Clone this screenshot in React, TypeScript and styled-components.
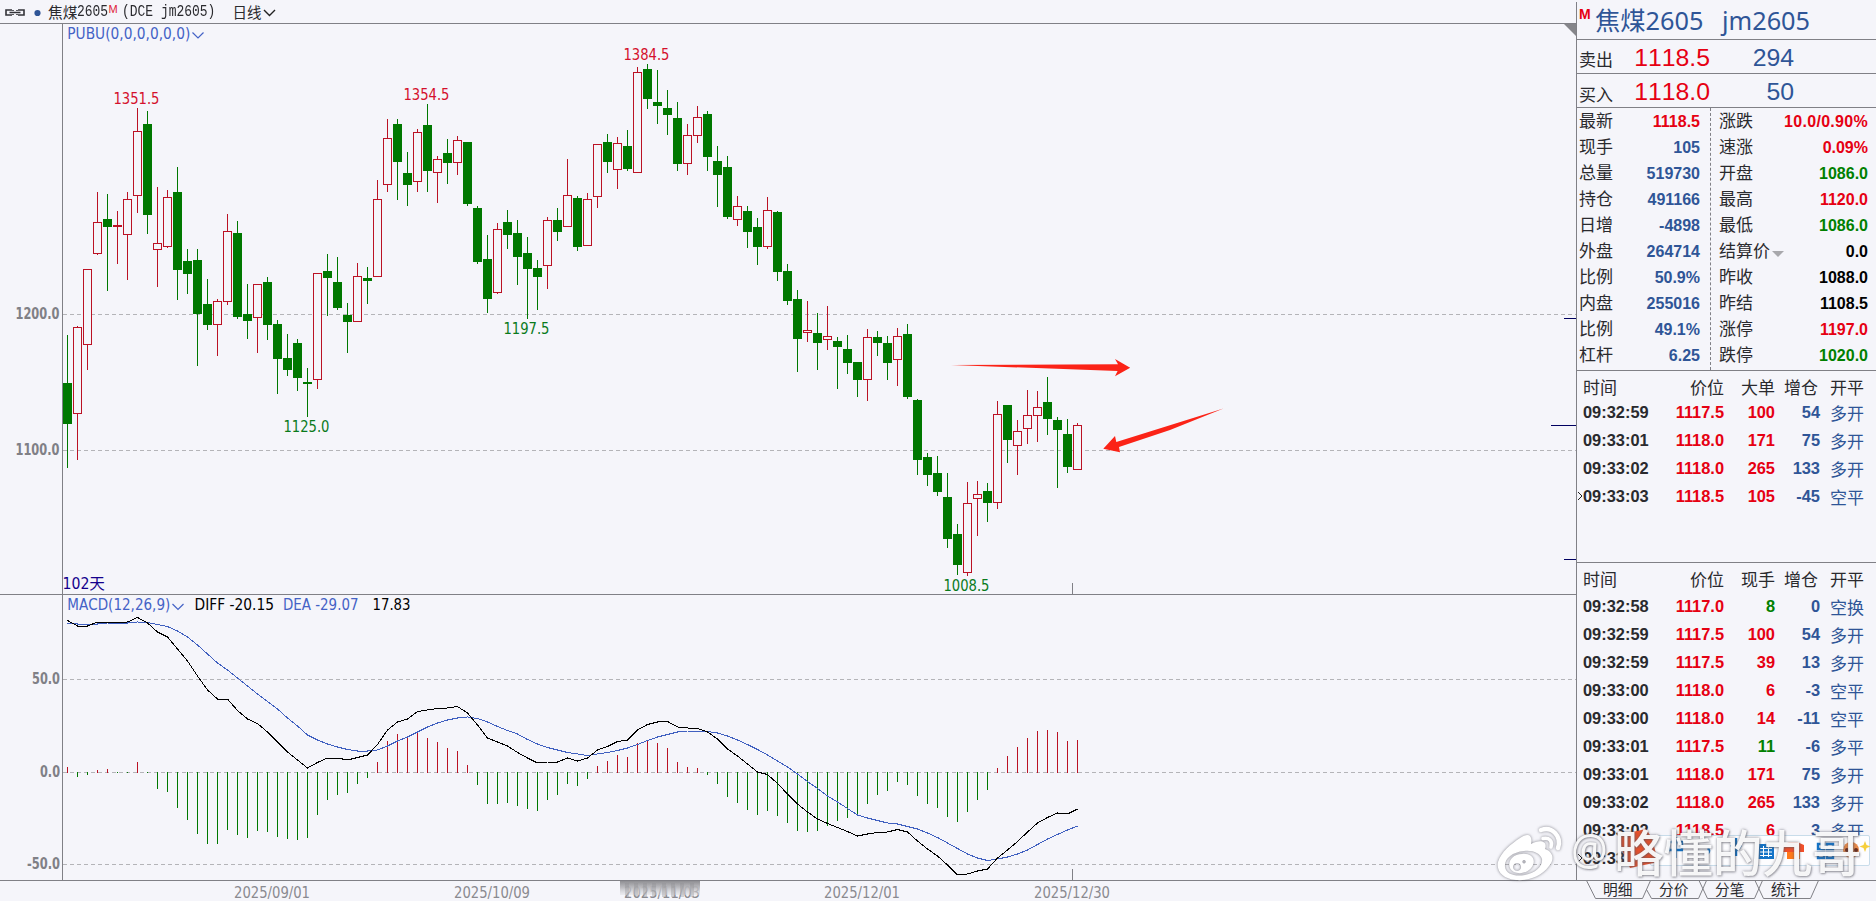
import React from "react";
import styled, { createGlobalStyle } from "styled-components";

const C = {
  bg: "#f5f5fa",
  line: "#808086",
  up: "#bb1224",
  down: "#007800",
  red: "#e60012",
  green: "#008000",
  blue: "#2f5597",
  ink: "#2a2a2e",
};

const CJK = '"Liberation Sans", "Noto Sans CJK SC", sans-serif';
const TAHOMA = '"DejaVu Sans Condensed", "DejaVu Sans", "Noto Sans CJK SC", sans-serif';

const GlobalStyle = createGlobalStyle`
  html, body { margin: 0; padding: 0; background: ${C.bg}; overflow: hidden; }
  * { box-sizing: border-box; }
`;

const Screen = styled.div`
  position: relative;
  width: 1876px;
  height: 901px;
  background: ${C.bg};
  font-family: ${CJK};
  font-kerning: none;
  color: ${C.ink};
  overflow: hidden;
`;
const Main = styled.div`
  display: flex;
  height: 880px;
`;
const ChartArea = styled.div`
  width: 1576px;
  display: flex;
  flex-direction: column;
`;
const Header = styled.header`
  height: 24px;
  border-bottom: 1px solid ${C.line};
  display: flex;
  align-items: center;
  padding-left: 5px;
  white-space: nowrap;
`;
const Name = styled.span`
  font: 400 14.7px/22px "Noto Sans CJK SC", sans-serif;
  margin-left: 7px;
`;
const Mono = styled.span<{ $w: number }>`
  display: inline-block;
  width: ${(p) => p.$w}px;
  font: 16px/22px "Liberation Mono", monospace;
  transform: scaleX(0.81);
  transform-origin: 0 50%;
  white-space: pre;
`;
const MainMark = styled.sup`
  font: 11px/12px "Liberation Sans", sans-serif;
  color: #e02038;
  align-self: flex-start;
  margin-top: 3px;
  width: 14px;
`;
const Period = styled.span`
  font: 400 14.5px/22px "Noto Sans CJK SC", sans-serif;
  margin-right: 2px;
`;
const Pane = styled.svg`
  display: block;
  flex: none;
`;
const ChartText = styled.text`
  font-family: ${TAHOMA};
  font-size: 15px;
`;
const Divider = styled.div`
  height: 1px;
  background: ${C.line};
`;

const Panel = styled.aside`
  width: 300px;
  margin-top: 2px;
  border-left: 1px solid ${C.line};
  display: flex;
  flex-direction: column;
  font-kerning: none;
`;
const Title = styled.h1`
  margin: 0;
  height: 38px;
  border-bottom: 1px solid ${C.line};
  display: flex;
  font: 25.3px/37px "Noto Sans", "Noto Sans CJK SC", sans-serif;
  color: ${C.blue};
  padding-left: 2px;
  white-space: pre;
`;
const TitleMark = styled.span`
  font: bold 14px/24px "Liberation Sans", sans-serif;
  color: ${C.red};
  width: 16px;
`;
const TitleName = styled.span`
  width: 127px;
  font-weight: 400;
`;
const Depth = styled.div`
  height: 34px;
  border-bottom: 1px solid ${C.line};
  display: grid;
  grid-template-columns: 34px 97px 84px;
  padding-left: 2px;
  font-size: 24.8px;
  line-height: 35px;
  text-align: right;
`;
const Label = styled.span<{ $shift?: number }>`
  font: 400 17px/26px "Noto Sans CJK SC", sans-serif;
  color: ${C.ink};
  text-align: left;
  position: relative;
  top: ${(p) => p.$shift ?? -1}px;
  white-space: nowrap;
`;
const Num = styled.span<{ $c: string }>`
  color: ${(p) => p.$c};
`;
const Stats = styled.div`
  display: grid;
  grid-template-columns: 133px 167px;
  height: 263px;
  border-bottom: 1px solid ${C.line};
`;
const StatCol = styled.div<{ $right?: boolean }>`
  padding: 0 ${(p) => (p.$right ? 9 : 10)}px 0 ${(p) => (p.$right ? 8 : 2)}px;
  border-left: ${(p) => (p.$right ? `1px dashed ${C.line}` : "none")};
`;
const Stat = styled.div`
  height: 26px;
  display: flex;
  justify-content: space-between;
`;
const StatNum = styled(Num)<{ $loose?: boolean }>`
  font: bold 16px/${(p) => (p.$loose ? 27 : 28)}px "Liberation Sans", sans-serif;
  letter-spacing: ${(p) => (p.$loose ? 0.3 : 0)}px;
`;
const Caret = styled.i`
  display: inline-block;
  border: 6px solid transparent;
  border-top-color: #a8a8ac;
  border-bottom: 0;
  margin-left: 2px;
`;
const Ticks = styled.section<{ $h: number }>`
  height: ${(p) => p.$h}px;
  flex: none;
  overflow: hidden;
  padding-top: 3px;
`;
const TickRow = styled.div`
  position: relative;
  height: 28px;
  display: grid;
  grid-template-columns: 82px 59px 51px 45px 56px;
  padding-left: 6px;
  text-align: right;
  font: bold 16.4px/28px "Liberation Sans", sans-serif;
`;
const TickHead = styled(TickRow)<{ $h: number }>`
  height: ${(p) => p.$h}px;
  font: 400 17px/25px "Noto Sans CJK SC", sans-serif;
`;
const Time = styled.span`
  text-align: left;
`;
const Kind = styled.span`
  font: 400 17px/29px "Noto Sans CJK SC", sans-serif;
  text-align: left;
  padding-left: 10px;
  color: ${C.blue};
`;
const HeadKind = styled(Kind)`
  color: ${C.ink};
  line-height: 25px;
`;
const HeadDelta = styled.span`
  padding-right: 2px;
`;
const Current = styled.svg`
  position: absolute;
  left: 0;
  top: 9px;
`;
const Footer = styled.footer`
  display: flex;
  height: 20px;
`;
const Tabs = styled.nav`
  position: relative;
  width: 300px;
  height: 20px;
`;
const TabShapes = styled.svg`
  position: absolute;
  left: 0;
  top: -1px;
`;
const TabList = styled.div`
  position: relative;
  display: flex;
  padding-left: 27px;
`;
const Tab = styled.span`
  width: 56px;
  font: 400 14.7px/16px "Noto Sans CJK SC", sans-serif;
`;
const Overlay = styled.div`
  position: absolute;
  left: 1490px;
  top: 815px;
  width: 386px;
  height: 72px;
`;
const OverlayArt = styled.svg`
  position: absolute;
  inset: 0;
`;

/* [direction, high, bodyTop, bodyBottom, low], one entry per trading day */
type Candle = [0 | 1, number, number, number, number];
const candles: Candle[] = [
  [0, 335, 383, 424, 468], [1, 326, 327, 414, 460], [1, 269, 269, 345, 370], [1, 192, 222, 254, 255],
  [0, 194, 219, 227, 291], [1, 211, 225, 227, 264], [1, 192, 199, 235, 280], [1, 108, 131, 196, 213],
  [0, 111, 124, 215, 234], [1, 187, 243, 250, 287], [1, 190, 197, 247, 248], [0, 167, 192, 270, 300],
  [0, 249, 261, 274, 294], [0, 249, 260, 314, 366], [0, 279, 304, 325, 330], [1, 299, 301, 325, 356],
  [1, 214, 231, 302, 305], [0, 221, 233, 317, 319], [0, 284, 314, 321, 339], [1, 284, 284, 318, 353],
  [0, 277, 282, 325, 340], [0, 320, 324, 359, 394], [0, 334, 358, 370, 376], [0, 339, 343, 378, 391],
  [0, 368, 382, 384, 417], [1, 273, 273, 380, 389], [0, 254, 271, 278, 316], [0, 257, 282, 308, 310],
  [0, 303, 315, 322, 353], [1, 263, 276, 322, 322], [0, 267, 278, 281, 304], [1, 180, 199, 277, 277],
  [1, 119, 138, 185, 192], [0, 119, 124, 162, 200], [0, 152, 173, 185, 206], [1, 129, 132, 182, 192],
  [0, 104, 125, 171, 192], [1, 156, 159, 173, 203], [0, 139, 153, 163, 184], [1, 136, 140, 163, 175],
  [0, 142, 142, 204, 206], [0, 206, 208, 262, 264], [0, 235, 259, 299, 313], [1, 223, 229, 293, 294],
  [0, 210, 222, 235, 249], [0, 220, 233, 257, 285], [0, 237, 253, 269, 319], [0, 260, 268, 277, 310],
  [1, 217, 220, 266, 289], [0, 208, 220, 232, 241], [1, 159, 195, 227, 227], [0, 196, 198, 247, 251],
  [1, 193, 199, 246, 246], [1, 144, 144, 197, 208], [0, 134, 142, 162, 173], [1, 137, 143, 170, 189],
  [0, 130, 146, 169, 171], [1, 67, 72, 173, 173], [0, 64, 69, 99, 109], [0, 70, 102, 106, 124],
  [0, 90, 108, 115, 135], [0, 102, 118, 164, 171], [1, 124, 135, 164, 175], [1, 106, 117, 136, 143],
  [0, 111, 114, 157, 171], [0, 146, 161, 175, 207], [0, 156, 167, 217, 219], [1, 196, 206, 220, 226],
  [0, 206, 211, 232, 248], [0, 218, 227, 247, 265], [1, 197, 210, 247, 249], [0, 211, 212, 272, 281],
  [0, 264, 271, 301, 305], [0, 290, 299, 339, 372], [1, 301, 330, 333, 342], [0, 313, 333, 343, 370],
  [1, 306, 336, 340, 350], [0, 337, 341, 347, 389], [0, 335, 349, 363, 374], [0, 362, 362, 380, 397],
  [1, 329, 337, 380, 401], [0, 331, 337, 343, 356], [0, 336, 343, 363, 380], [1, 328, 336, 360, 386],
  [0, 324, 334, 397, 399], [0, 399, 400, 460, 475], [0, 453, 457, 475, 486], [0, 456, 473, 492, 496],
  [0, 473, 497, 539, 548], [0, 524, 534, 565, 575], [1, 482, 503, 573, 576], [1, 481, 494, 499, 536],
  [0, 483, 491, 503, 522], [1, 401, 414, 503, 509], [0, 405, 405, 440, 463], [1, 420, 431, 446, 475],
  [1, 390, 415, 429, 444], [1, 391, 407, 416, 442], [0, 377, 402, 419, 435], [0, 417, 420, 430, 488],
  [0, 419, 434, 467, 473], [1, 423, 425, 470, 470],
];

const bars = [
  767, 777, 775, 770, 769, 773, 773, 762, 773, 789, 792, 808, 820, 834, 844, 844, 830, 835, 838, 831,
  832, 837, 839, 840, 838, 815, 800, 795, 793, 784, 778, 762, 741, 734, 736, 732, 738, 742, 748, 751,
  765, 785, 804, 804, 803, 806, 809, 811, 800, 795, 784, 786, 779, 766, 761, 755, 757, 743, 740, 743,
  748, 762, 767, 768, 775, 784, 797, 803, 810, 815, 811, 816, 823, 831, 832, 831, 826, 821, 818, 816,
  804, 795, 791, 782, 785, 796, 804, 808, 817, 822, 812, 800, 790, 768, 756, 747, 738, 731, 730, 732,
  741, 740,
];

const diff = [
  620.5, 626, 626, 622, 622, 623, 622, 617.5, 623, 632, 637, 649, 661, 676, 690, 699, 699, 710.5, 719, 723.5,
  732, 742, 752, 760, 768, 762.5, 758, 758, 760, 757.5, 755, 744.5, 730, 722, 719, 711.5, 710, 708.5, 708, 706.5,
  713, 725, 738, 742, 746, 752.5, 758, 763, 762, 762, 758, 761, 758, 750, 746.5, 741.5, 740, 730, 724.5, 722,
  721.5, 727, 728, 728.5, 732, 739, 749, 756, 764, 772, 774.5, 783.5, 794, 804, 812, 819, 823.5, 827.5, 831.5, 836,
  834, 832.5, 832, 829.5, 832, 841, 849, 856, 865, 875, 874, 871, 869, 858, 850, 841.5, 832, 823, 817.5, 813,
  814, 809,
];

const dea = [
  623.5, 624, 624, 624, 623, 623, 623, 622, 622.5, 624.5, 626.5, 631, 637, 645, 654, 663, 670, 678, 686, 694,
  701.5, 709, 718, 726, 735, 740, 744, 747, 749.5, 751, 751, 750, 746, 741, 737, 732, 727, 723, 720, 718,
  717, 718.5, 722, 726.5, 730.5, 734, 739.5, 744, 747.5, 750, 752.5, 754, 755.5, 754, 752.5, 750.5, 748, 744.5, 740.5, 737,
  734.5, 732, 731, 731, 731.5, 733, 736, 740, 744.5, 749.5, 755, 761, 767, 774, 781.5, 788.5, 796, 802, 808.5, 815,
  818, 820.5, 823, 824, 826.5, 829, 833, 837.5, 843, 848.5, 854, 858, 860.5, 859, 857, 854, 850, 844.5, 839, 834.5,
  830, 826,
];

const dayX = (i: number) => 67 + i * 10;
const toPoints = (v: number[]) => v.map((y, i) => `${dayX(i) + 0.5},${y}`).join(" ");

interface MarkProps {
  x: number;
  y: number;
  w: number;
  fill: string;
  bold?: boolean;
  children: string;
}
const Mark = ({ x, y, w, fill, bold, children }: MarkProps) => (
  <ChartText x={x} y={y} fill={fill} textLength={w} lengthAdjust="spacingAndGlyphs" fontWeight={bold ? 700 : 400}>
    {children}
  </ChartText>
);

const Chevron = ({ x, y, stroke }: { x: number; y: number; stroke: string }) => (
  <path d={`M${x} ${y}l5.5 5.5l5.5 -5.5`} fill="none" stroke={stroke} strokeWidth="1.2" />
);

const Grid = ({ ys }: { ys: number[] }) => (
  <g stroke="#b4b4b8" strokeDasharray="4 3" shapeRendering="crispEdges">
    {ys.map((y) => (
      <line key={y} x1="63" x2="1576" y1={y + 0.5} y2={y + 0.5} />
    ))}
  </g>
);

const PricePane = () => (
  <Pane width="1576" height="570" viewBox="0 24 1576 570">
    <Grid ys={[314, 450]} />
    <g shapeRendering="crispEdges">
      <rect x="62" y="24" width="1" height="570" fill={C.line} />
      {candles.map(([up, hi, top, bot, lo], i) => {
        const x = dayX(i);
        const c = up ? C.up : C.down;
        return (
          <g key={i}>
            <rect x={x} y={hi} width="1" height={lo - hi} fill={c} />
            {up && bot - top > 2 ? (
              <rect x={x - 3.5} y={top + 0.5} width="8" height={bot - top - 1} fill={C.bg} stroke={c} />
            ) : (
              <rect x={x - 4} y={top} width="9" height={bot - top} fill={c} />
            )}
          </g>
        );
      })}
      <rect x="1072" y="583" width="1" height="11" fill={C.line} />
      <rect x="1564" y="318" width="12" height="1" fill="#000060" />
      <rect x="1551" y="425" width="25" height="1" fill="#000060" />
      <rect x="1564" y="559" width="12" height="1" fill="#000060" />
    </g>
    <path d="M1564 24H1576V36Z" fill="#85858a" />
    <Mark x={67.3} y={39} w={123} fill="#4462c6">PUBU(0,0,0,0,0,0)</Mark>
    <Chevron x={192.5} y={32.5} stroke="#4462c6" />
    <Mark x={15.5} y={319} w={44} fill={C.line} bold>1200.0</Mark>
    <Mark x={15.5} y={455} w={44} fill={C.line} bold>1100.0</Mark>
    <Mark x={113.5} y={104} w={46} fill="#d4102c">1351.5</Mark>
    <Mark x={403.5} y={100} w={46} fill="#d4102c">1354.5</Mark>
    <Mark x={623.5} y={60} w={46} fill="#d4102c">1384.5</Mark>
    <Mark x={503.5} y={334} w={46} fill="#0a7a1c">1197.5</Mark>
    <Mark x={283.5} y={432} w={46} fill="#0a7a1c">1125.0</Mark>
    <Mark x={943.5} y={591} w={46} fill="#0a7a1c">1008.5</Mark>
    <Mark x={62.5} y={589} w={42.5} fill="#14008c">102天</Mark>
    <g fill="#fb2317">
      <path d="M951 365L1118 364.2L1115 359L1130.2 367.7L1115 376.3L1117.6 371Z" />
      <path d="M1223.5 408.5L1170 430L1119 447L1120 452.3L1103.3 448.7L1115 436L1116.3 442Z" />
    </g>
  </Pane>
);

const MacdPane = () => (
  <Pane width="1576" height="285" viewBox="0 595 1576 285">
    <Grid ys={[679, 772, 864]} />
    <g shapeRendering="crispEdges">
      <rect x="62" y="595" width="1" height="285" fill={C.line} />
      {bars.map((y, i) => (
        <rect
          key={i}
          x={dayX(i)}
          y={Math.min(y, 772)}
          width="1"
          height={Math.abs(y - 772) + (y < 772 ? 1 : 0)}
          fill={y < 772 ? C.up : C.down}
        />
      ))}
      <polyline points={toPoints(dea)} fill="none" stroke="#4060c0" />
      <polyline points={toPoints(diff)} fill="none" stroke="#000" />
      <rect x="1072" y="869" width="1" height="11" fill={C.line} />
    </g>
    <Mark x={67.3} y={610} w={103} fill="#4462c6">MACD(12,26,9)</Mark>
    <Chevron x={172.5} y={604} stroke="#4462c6" />
    <Mark x={194.5} y={610} w={79.5} fill="#000">DIFF -20.15</Mark>
    <Mark x={283} y={610} w={75.5} fill="#4462c6">DEA -29.07</Mark>
    <Mark x={372.5} y={610} w={38} fill="#000">17.83</Mark>
    <Mark x={32} y={684} w={28} fill={C.line} bold>50.0</Mark>
    <Mark x={40} y={777} w={20} fill={C.line} bold>0.0</Mark>
    <Mark x={27} y={869} w={33} fill={C.line} bold>-50.0</Mark>
  </Pane>
);

const DateAxis = () => (
  <Pane width="1576" height="20" viewBox="0 881 1576 20">
    <defs>
      <linearGradient id="fade" x1="0" y1="0" x2="0" y2="1">
        <stop offset="0" stopColor="#8e8e92" />
        <stop offset="0.45" stopColor="#b4b4b8" stopOpacity="0.9" />
        <stop offset="1" stopColor="#dcdce0" stopOpacity="0.4" />
      </linearGradient>
    </defs>
    <Mark x={234} y={898} w={76} fill="#8a8a90">2025/09/01</Mark>
    <Mark x={454} y={898} w={76} fill="#8a8a90">2025/10/09</Mark>
    <Mark x={624} y={898} w={76} fill="#8a8a90">2025/11/03</Mark>
    <rect x="620" y="881" width="80" height="14" fill="url(#fade)" />
    <g fill="#8e8e92" opacity="0.35">
      {[625, 634, 643, 652, 662, 671, 680, 690].map((x) => (
        <rect key={x} x={x} y="883" width="4" height="14" />
      ))}
    </g>
    <Mark x={824} y={898} w={76} fill="#8a8a90">2025/12/01</Mark>
    <Mark x={1034} y={898} w={76} fill="#8a8a90">2025/12/30</Mark>
  </Pane>
);

const leftStats: [string, string, string][] = [
  ["最新", "1118.5", C.red], ["现手", "105", C.blue], ["总量", "519730", C.blue], ["持仓", "491166", C.blue],
  ["日增", "-4898", C.blue], ["外盘", "264714", C.blue], ["比例", "50.9%", C.blue], ["内盘", "255016", C.blue],
  ["比例", "49.1%", C.blue], ["杠杆", "6.25", C.blue],
];
const rightStats: [string, string, string][] = [
  ["涨跌", "10.0/0.90%", C.red], ["速涨", "0.09%", C.red], ["开盘", "1086.0", C.green], ["最高", "1120.0", C.red],
  ["最低", "1086.0", C.green], ["结算价", "0.0", "#000"], ["昨收", "1088.0", "#000"], ["昨结", "1108.5", "#000"],
  ["涨停", "1197.0", C.red], ["跌停", "1020.0", C.green],
];

type Tick = [string, string, string, string, string];
const bigTicks: Tick[] = [
  ["09:32:59", "1117.5", "100", "54", "多开"],
  ["09:33:01", "1118.0", "171", "75", "多开"],
  ["09:33:02", "1118.0", "265", "133", "多开"],
  ["09:33:03", "1118.5", "105", "-45", "空平"],
];
const allTicks: Tick[] = [
  ["09:32:58", "1117.0", "8", "0", "空换"],
  ["09:32:59", "1117.5", "100", "54", "多开"],
  ["09:32:59", "1117.5", "39", "13", "多开"],
  ["09:33:00", "1118.0", "6", "-3", "空平"],
  ["09:33:00", "1118.0", "14", "-11", "空平"],
  ["09:33:01", "1117.5", "11", "-6", "多平"],
  ["09:33:01", "1118.0", "171", "75", "多开"],
  ["09:33:02", "1118.0", "265", "133", "多开"],
  ["09:33:02", "1118.5", "6", "3", "多开"],
  ["09:33", "", "", "", ""],
];

interface TickTableProps {
  h: number;
  head: number;
  volume: string;
  rows: Tick[];
}
const TickTable = ({ h, head, volume, rows }: TickTableProps) => (
  <Ticks $h={h}>
    <TickHead $h={head}>
      <Time>时间</Time>
      <span>价位</span>
      <span>{volume}</span>
      <HeadDelta>增仓</HeadDelta>
      <HeadKind>开平</HeadKind>
    </TickHead>
    {rows.map(([t, p, v, d, k], i) => (
      <TickRow key={i}>
        {i === rows.length - 1 && (
          <Current width="7" height="10">
            <path d="M1 1L5 5L1 9" fill="none" stroke="#222" />
          </Current>
        )}
        <Time>{t}</Time>
        <Num $c={C.red}>{p}</Num>
        <Num $c={v === "8" || v === "11" ? C.green : C.red}>{v}</Num>
        <Num $c={C.blue}>{d}</Num>
        <Kind>{k}</Kind>
      </TickRow>
    ))}
  </Ticks>
);

const StatList = ({ items, right }: { items: [string, string, string][]; right?: boolean }) => (
  <StatCol $right={right}>
    {items.map(([l, v, c], i) => (
      <Stat key={i}>
        <Label>
          {l}
          {l === "结算价" && <Caret />}
        </Label>
        <StatNum $c={c} $loose={v.includes("/")}>{v}</StatNum>
      </Stat>
    ))}
  </StatCol>
);

const ImeToolbar = styled.div`
  position: absolute;
  left: 160px;
  top: 20px;
  width: 220px;
  height: 31px;
  background: #fdfdff;
  border: 1px solid #c8dcea;
  border-radius: 2px;
`;
const Watermark = styled.span`
  position: absolute;
  left: 81px;
  top: 2px;
  display: flex;
  font: 500 49.5px/68px "Noto Sans CJK SC", sans-serif;
  color: rgba(255, 255, 255, 0.93);
  text-shadow: 0 0 3px rgba(90, 90, 100, 0.75), 1px 1px 2px rgba(90, 90, 100, 0.4);
  white-space: nowrap;
`;
const At = styled.span`
  display: block;
  width: 43px;
  font: 43px/64px "Noto Sans", sans-serif;
  transform: scaleX(0.95);
  transform-origin: 0 50%;
`;

export default function App() {
  return (
    <Screen>
      <GlobalStyle />
      <Main>
        <ChartArea>
          <Header>
            <svg width="36" height="22" viewBox="5 0 36 22">
              <g fill="none" stroke="#333338" strokeWidth="1.6">
                <path d="M12 9H6V14H12" />
                <path d="M13 9V10M13 13V14M9.500 11.500H20.500M17 9V10M17 13V14" />
                <path d="M18 9H24V14H18" />
              </g>
              <circle cx="37.500" cy="12" r="3.100" fill="#2f5597" />
            </svg>
            <Name>焦煤</Name>
            <Mono $w={31}>2605</Mono>
            <MainMark>M</MainMark>
            <Mono $w={110}>(DCE jm2605)</Mono>
            <Period>日线</Period>
            <svg width="14" height="22">
              <path d="M1 9L6.500 14.500L12 9" fill="none" stroke="#222" strokeWidth="1.4" />
            </svg>
          </Header>
          <PricePane />
          <Divider />
          <MacdPane />
        </ChartArea>
        <Panel>
          <Title>
            <TitleMark>M</TitleMark>
            <TitleName>焦煤2605</TitleName>
            <span>jm2605</span>
          </Title>
          <Depth>
            <Label $shift={6}>卖出</Label>
            <Num $c={C.red}>1118.5</Num>
            <Num $c={C.blue}>294</Num>
          </Depth>
          <Depth>
            <Label $shift={7}>买入</Label>
            <Num $c={C.red}>1118.0</Num>
            <Num $c={C.blue}>50</Num>
          </Depth>
          <Stats>
            <StatList items={leftStats} />
            <StatList items={rightStats} right />
          </Stats>
          <TickTable h={191} head={24} volume="大单" rows={bigTicks} />
          <Divider />
          <TickTable h={316} head={26} volume="现手" rows={allTicks} />
        </Panel>
      </Main>
      <Divider />
      <Footer>
        <DateAxis />
        <Tabs>
          <TabShapes width="300" height="20" viewBox="1576 880 300 20" fill="none" stroke={C.line}>
            <path d="M1586.5 880.500L1595.500 898.500H1642.500L1650.500 880.500" />
            <path d="M1646.500 889.500L1651.500 898.500H1698.500L1706.500 880.500" />
            <path d="M1699 880.500L1707.500 898.500H1754.500L1762.500 880.500" />
            <path d="M1755 880.500L1763.500 898.500H1810.500L1818.500 880.500" />
          </TabShapes>
          <TabList>
            <Tab>明细</Tab>
            <Tab>分价</Tab>
            <Tab>分笔</Tab>
            <Tab>统计</Tab>
          </TabList>
        </Tabs>
      </Footer>
      <Overlay>
        <ImeToolbar />
        <OverlayArt width="386" height="72" viewBox="1490 815 386 72">
          <path d="M1619 835L1646 829L1652 838L1658 862L1630 868L1622 850Z" fill="#e8502a" />
          <g fill="none" stroke="#0a6fc4" strokeWidth="2.400">
            <path d="M1669 842H1682V850H1669ZM1675.500 837V858" />
            <path d="M1708 848q3 4 -2 7" />
            <path d="M1736 838v9M1731 845q5 10 10 0M1736 850v6" />
          </g>
          <rect x="1758" y="844" width="16" height="15" fill="#1474c8" />
          <path d="M1760 848.500H1772M1760 852H1772M1760 855.500H1772M1763.500 846V857M1768.500 846V857" stroke="#fff" strokeWidth="1" />
          <path d="M1783 845L1789 842H1797L1804 845V852H1800V859H1787V852H1783Z" fill="#f2502a" />
          <path d="M1787 852H1800V859H1787Z" fill="#ff7a1a" />
          <path d="M1818 844H1824V849H1818ZM1827 844H1833V849H1827ZM1818 853H1824V858H1818ZM1827 853H1833V858H1827Z" fill="none" stroke="#1474c8" strokeWidth="2.400" />
          <circle cx="1851" cy="850" r="8" fill="#e88a4a" />
          <circle cx="1847" cy="850" r="2" fill="#6a2c1c" />
          <circle cx="1856" cy="850" r="2" fill="#6a2c1c" />
          <path d="M1865 841l1.500 4l4 1.500l-4 1.500l-1.500 4l-1.500 -4l-4 -1.500l4 -1.500Z" fill="#f6cf3c" />
          <g style={{ filter: "drop-shadow(0 0 1.5px rgba(80,80,90,.7))" }}>
            <path
              fillRule="evenodd"
              fill="#fff"
              d="M1520 838C1528 832 1533 835 1531 844C1540 839 1548 841 1545 849C1553 852 1555 859 1549 866C1542 876 1529 881 1516 880C1503 879 1496 871 1498 862C1501 852 1511 844 1520 838ZM1524 851C1512 852 1504 859 1505 867C1506 874 1515 877 1525 875C1536 873 1543 866 1542 859C1540 853 1533 850 1524 851Z"
            />
            <path
              fillRule="evenodd"
              fill="#fff"
              d="M1522 854C1530 853 1536 858 1533 865C1530 872 1521 875 1514 872C1508 869 1508 862 1512 858C1515 855 1518 854 1522 854ZM1517 863a4 4 0 1 0 .1 0ZM1524 860a1.700 1.700 0 1 0 .1 0Z"
            />
            <path d="M1541 830C1552 826 1562 836 1558 848" fill="none" stroke="#fff" strokeWidth="4.500" strokeLinecap="round" />
            <path d="M1543 838.500C1549 837 1553 841 1551 847" fill="none" stroke="#fff" strokeWidth="3.500" strokeLinecap="round" />
          </g>
        </OverlayArt>
        <Watermark>
          <At>@</At>略懂的九哥
        </Watermark>
      </Overlay>
    </Screen>
  );
}
